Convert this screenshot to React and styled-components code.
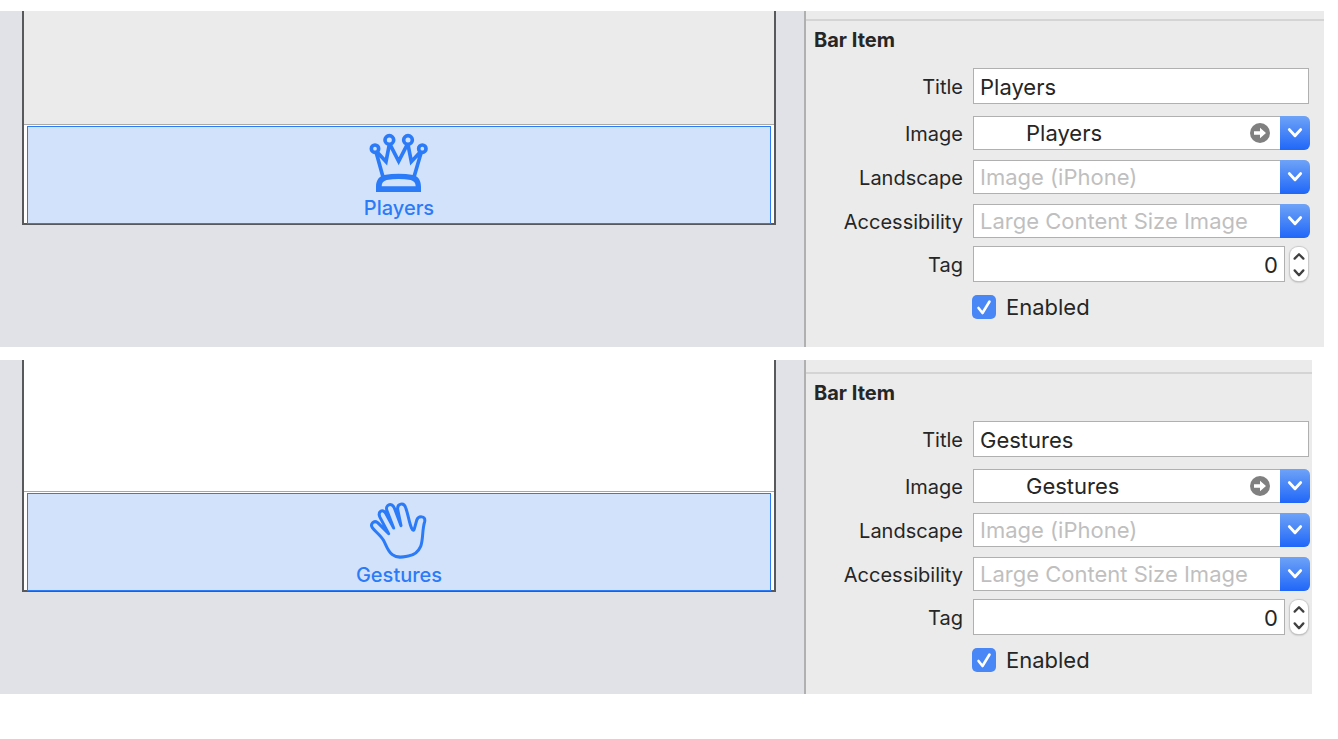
import React, { useId, useState } from "react";
import styled, { createGlobalStyle } from "styled-components";

const blue = "#2b7bf8";

const GlobalStyle = createGlobalStyle`
  *, *::before, *::after { box-sizing: border-box; }
  body {
    margin: 0;
    background: #fff;
    color: #262626;
    font-family: Inter, "Liberation Sans", sans-serif;
  }
  button, input { font-family: inherit; }
`;

const Page = styled.main`
  display: flex;
  flex-direction: column;
  gap: 13px;
  padding: 11px 0 45px;
`;

const Editor = styled.section`
  display: flex;
  margin-right: ${(p) => (p.$narrow ? 26 : 14)}px;
  background: #e1e2e7;
`;

const Canvas = styled.div`
  flex: 1;
  min-width: 0;
  padding: 0 28px 0 22px;
`;

const Device = styled.div`
  border: 2px solid #58595b;
  border-top: 0;
  background: #fff;
`;

const Screen = styled.div`
  height: ${(p) => p.$height}px;
  background: ${(p) => p.$fill};
`;

const TabBar = styled.div`
  display: flex;
  border-top: 1px solid #a9a9a9;
  padding: 1px 3px 0;
`;

const TabItem = styled.button`
  flex: 1;
  display: flex;
  flex-direction: column;
  align-items: center;
  gap: 3px;
  height: 98px;
  margin: 0 0 -1px;
  padding: 6px 0 0;
  border: 1px solid ${blue};
  background: #d3e2fb;
  color: ${blue};
  font-size: 20px;
  font-weight: 500;
  line-height: 24px;
`;

const Inspector = styled.aside`
  width: ${(p) => (p.$narrow ? 508 : 520)}px;
  padding: ${(p) => (p.$narrow ? "12px 0 22px" : "8px 0 28px")};
  border-left: 2px solid #b0b0b0;
  background: #ebebeb;
`;

const Group = styled.form`
  border-top: 2px solid #d4d4d4;
  padding: 7px ${(p) => (p.$narrow ? 2 : 14)}px 0 8px;
`;

const Heading = styled.h2`
  margin: 0 0 16px;
  font-size: 20px;
  font-weight: 700;
  line-height: 24px;
`;

const Row = styled.div`
  display: grid;
  grid-template-columns: 149px minmax(0, 1fr);
  column-gap: 10px;
  align-items: center;
  margin-bottom: ${(p) => p.$gap ?? 10}px;
`;

const Label = styled.label`
  padding-top: 2px;
  text-align: right;
  font-size: 20px;
  line-height: 24px;
`;

const TextField = styled.input`
  flex: 1;
  min-width: 0;
  height: 36px;
  margin: 0 1px 0 0;
  padding: 2px 6px 0;
  border: 1px solid #b0b0b0;
  border-radius: 0;
  outline: 0;
  background: #fff;
  color: #262626;
  font-size: 22px;
  text-align: ${(p) => p.$align ?? "left"};
`;

const Controls = styled.div`
  display: flex;
  align-items: center;
`;

const Combo = styled.div`
  display: flex;
  align-items: center;
  height: 34px;
  border: 1px solid #b0b0b0;
  border-right: 0;
  border-radius: 0 6px 6px 0;
  background: #fff;
`;

const ComboInput = styled.input`
  flex: 1;
  min-width: 0;
  height: 32px;
  padding: 0 0 0 ${(p) => (p.$inset ? 52 : 6)}px;
  border: 0;
  outline: 0;
  background: transparent;
  color: #262626;
  font-size: 22px;
  &::placeholder { color: #bfbfbf; opacity: 1; }
`;

const GoButton = styled.button`
  display: flex;
  margin-right: 10px;
  padding: 0;
  border: 0;
  background: none;
`;

const DropButton = styled.button`
  flex: none;
  display: flex;
  align-items: center;
  justify-content: center;
  width: 30px;
  height: 34px;
  padding: 0;
  border: 0;
  border-radius: 0 6px 6px 0;
  background: linear-gradient(#6ea3f7, #2067f8);
`;

const Stepper = styled.div`
  display: flex;
  flex-direction: column;
  width: 18px;
  height: 34px;
  margin: 0 2px 0 4px;
  border-radius: 8px;
  background: #fff;
  box-shadow: 0 0 1px 1px #c9c9c9, 0 1px 2px #999;
`;

const StepButton = styled.button`
  flex: 1;
  display: flex;
  align-items: center;
  justify-content: center;
  padding: 0;
  border: 0;
  background: none;
`;

const CheckLabel = styled.label`
  grid-column: 2;
  display: flex;
  align-items: center;
  gap: 10px;
  height: 24px;
  margin-left: -1px;
  font-size: 22px;
  line-height: 24px;
`;

const CheckBox = styled.span`
  display: grid;
  width: 24px;
  height: 24px;
  > * { grid-area: 1 / 1; }
  svg { pointer-events: none; visibility: hidden; }
  input:checked + svg { visibility: visible; }
`;

const CheckInput = styled.input`
  appearance: none;
  width: 24px;
  height: 24px;
  margin: 0;
  border-radius: 5px;
  background: #fff;
  &:checked { background: #4a87f6; }
`;

function CrownIcon() {
  return (
    <svg width="60" height="60" viewBox="87 54 180 180" fill="none" stroke="currentColor" aria-hidden="true">
      <g strokeWidth="11">
        <circle cx="105" cy="101" r="11" />
        <circle cx="148" cy="75" r="13" />
        <circle cx="204" cy="75" r="13" />
        <circle cx="247" cy="101" r="11" />
        <path d="M129 186 109 114M112 112 138 140 148 89M150 88 176 139 202 88M204 89 214 140 240 112M243 114 222 186" />
      </g>
      <path
        fill="currentColor"
        stroke="none"
        fillRule="evenodd"
        d="M108 231V215C108 195 118 184 132 180Q176 172 220 180C234 184 243 195 243 215V231ZM125 214H227C227 203 222 198 212 195Q176 189 140 195C130 198 125 203 125 214Z"
      />
    </svg>
  );
}

function HandIcon() {
  return (
    <svg width="60" height="60" viewBox="87 45 180 180" fill="none" stroke="currentColor" strokeWidth="9" strokeLinejoin="round" aria-hidden="true">
      <path d="M146 146 113 113C101 104 90 118 97 128C104 138 121 150 130 165C139 180 142 197 157 209C172 221 190 216 205 213C225 210 235 200 242 184C250 165 246 134 254 110C258 92 235 91 230 106L224 128C222 138 218 138 215 130C207 112 205 89 197 68C192 51 171 55 173 73L183 122 163 69C155 50 134 60 141 77L161 129 137 85C128 69 112 81 120 97Z" />
    </svg>
  );
}

function Chevron({ up, color, size }) {
  return (
    <svg width={size} height={size} viewBox="0 0 16 16" fill="none" stroke={color} strokeWidth="2.6" strokeLinecap="round" strokeLinejoin="round" aria-hidden="true">
      <path d={up ? "M3 11 8 6 13 11" : "M3 5 8 10.500 13 5"} />
    </svg>
  );
}

function ComboBox({ id, value, placeholder, linked }) {
  return (
    <Combo>
      <ComboInput id={id} defaultValue={value} placeholder={placeholder} $inset={linked} />
      {linked && (
        <GoButton type="button" aria-label="Show image">
          <svg width="20" height="20" viewBox="0 0 20 20" aria-hidden="true">
            <circle cx="10" cy="10" r="10" fill="#808080" />
            <path d="M4 8.300H10V4.800L16 10 10 15.200V11.700H4Z" fill="#fff" />
          </svg>
        </GoButton>
      )}
      <DropButton type="button" aria-label="Show choices">
        <Chevron color="#fff" size={18} />
      </DropButton>
    </Combo>
  );
}

function BarItemEditor({ title, icon, screenHeight, screenFill, narrow }) {
  const id = useId();
  const [tag, setTag] = useState(0);
  return (
    <Editor $narrow={narrow}>
      <Canvas>
        <Device>
          <Screen $height={screenHeight} $fill={screenFill} />
          <TabBar>
            <TabItem type="button">
              {icon}
              <span>{title}</span>
            </TabItem>
          </TabBar>
        </Device>
      </Canvas>
      <Inspector $narrow={narrow}>
        <Group $narrow={narrow}>
          <Heading>Bar Item</Heading>
          <Row $gap={12}>
            <Label htmlFor={id + "title"}>Title</Label>
            <Controls>
              <TextField id={id + "title"} defaultValue={title} />
            </Controls>
          </Row>
          <Row>
            <Label htmlFor={id + "image"}>Image</Label>
            <ComboBox id={id + "image"} value={title} linked />
          </Row>
          <Row>
            <Label htmlFor={id + "landscape"}>Landscape</Label>
            <ComboBox id={id + "landscape"} placeholder="Image (iPhone)" />
          </Row>
          <Row $gap={8}>
            <Label htmlFor={id + "access"}>Accessibility</Label>
            <ComboBox id={id + "access"} placeholder="Large Content Size Image" />
          </Row>
          <Row $gap={13}>
            <Label htmlFor={id + "tag"}>Tag</Label>
            <Controls>
              <TextField
                id={id + "tag"}
                $align="right"
                inputMode="numeric"
                value={tag}
                onChange={(e) => setTag(Number(e.target.value) || 0)}
              />
              <Stepper>
                <StepButton type="button" aria-label="Increase tag" onClick={() => setTag(tag + 1)}>
                  <Chevron up color="#404040" size={14} />
                </StepButton>
                <StepButton type="button" aria-label="Decrease tag" onClick={() => setTag(tag - 1)}>
                  <Chevron color="#404040" size={14} />
                </StepButton>
              </Stepper>
            </Controls>
          </Row>
          <Row $gap={0}>
            <CheckLabel>
              <CheckBox>
                <CheckInput type="checkbox" defaultChecked />
                <svg width="24" height="24" viewBox="0 0 24 24" fill="none" stroke="#fff" strokeWidth="2.6" strokeLinecap="round" strokeLinejoin="round" aria-hidden="true">
                  <path d="M6.500 13 10.500 18 17.500 6.500" />
                </svg>
              </CheckBox>
              Enabled
            </CheckLabel>
          </Row>
        </Group>
      </Inspector>
    </Editor>
  );
}

export default function App() {
  return (
    <>
      <GlobalStyle />
      <Page>
        <BarItemEditor title="Players" icon={<CrownIcon />} screenHeight={113} screenFill="#ebebeb" />
        <BarItemEditor title="Gestures" icon={<HandIcon />} screenHeight={131} screenFill="#fff" narrow />
      </Page>
    </>
  );
}
